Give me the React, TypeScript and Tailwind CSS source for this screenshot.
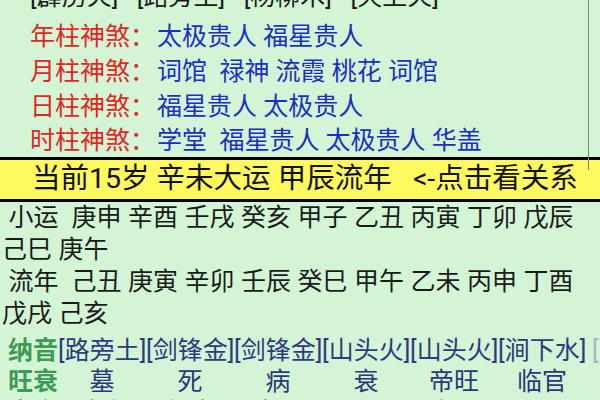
import React from "react";

const font = { fontFamily: "Roboto, 'Noto Sans CJK SC', sans-serif" };

const shensha = [
  { label: "年柱神煞：", value: "太极贵人 福星贵人" },
  { label: "月柱神煞：", value: "词馆  禄神 流霞 桃花 词馆" },
  { label: "日柱神煞：", value: "福星贵人 太极贵人" },
  { label: "时柱神煞：", value: "学堂  福星贵人 太极贵人 华盖" },
];

const luck = [
  " 小运  庚申 辛酉 壬戌 癸亥 甲子 乙丑 丙寅 丁卯 戊辰",
  "己巳 庚午",
  " 流年  己丑 庚寅 辛卯 壬辰 癸巳 甲午 乙未 丙申 丁酉",
  "戊戌 己亥",
];

const nayin = ["[路旁土]", "[剑锋金]", "[剑锋金]", "[山头火]", "[山头火]", "[涧下水]"];
const wangshuai = ["墓", "死", "病", "衰", "帝旺", "临官"];
const kongwang = ["戌亥", "午未", "申酉", "子丑", "寅卯", "辰巳"];

export default function App() {
  return (
    <div className="relative h-screen w-full overflow-hidden bg-[#d3f5d5]" style={font}>
      <div className="absolute left-[588px] top-0 h-[170px] w-px bg-[#6f8a72]" />

      {/* top: hidden nayin line + shensha */}
      <div className="h-[157px]">
        <div className="h-[14px] overflow-hidden">
          <div className="-mt-[21px] whitespace-pre pl-[30px] text-[25px] leading-[35px] text-[#1a1a1a]">
            {"[霹雳火]   [路旁土]   [杨柳木]   [天上火]"}
          </div>
        </div>
        <div className="mt-[5px]">
          {shensha.map((row, i) => (
            <div
              key={i}
              className={`flex items-center whitespace-pre pl-[30px] text-[25px] ${
                i === 3 ? "h-[33px]" : "h-[35px]"
              }`}
            >
              <span className="w-[127px] text-[#e3241f]">{row.label}</span>
              <span className="text-[#1c2fc4]">{row.value}</span>
            </div>
          ))}
        </div>
      </div>

      {/* current luck bar */}
      <div className="flex h-[45px] items-center whitespace-pre border-y-[3px] border-black bg-[#fdf95f] pl-[32px] text-[28.5px] text-[#111]">
        {"当前15岁 辛未大运 甲辰流年   <-点击看关系"}
      </div>

      {/* xiaoyun / liunian */}
      <div className="pl-[2px] text-[25px] leading-[32px] text-[#1a1a1a] [word-spacing:0.3px]">
        {luck.map((line, i) => (
          <div key={i} className="whitespace-pre">
            {line}
          </div>
        ))}
      </div>

      {/* pillars table */}
      <div className="mt-[2px] pl-[8px] text-[25px]">
        <div className="grid h-[31px] grid-cols-[50px_repeat(7,88px)] items-center whitespace-nowrap">
          <span className="font-bold text-[#3e9a55]">纳音</span>
          {nayin.map((n, i) => (
            <span key={i} className="text-center text-[#2d3a80]">
              {n}
            </span>
          ))}
          <span className="pl-[6px] text-left text-[#aab4cc]">[大林木]</span>
        </div>
        <div className="grid h-[31px] grid-cols-[50px_repeat(7,88px)] items-center whitespace-nowrap">
          <span className="font-bold text-[#3e9a55]">旺衰</span>
          {wangshuai.map((n, i) => (
            <span key={i} className="text-center text-[#2b3778]">
              {n}
            </span>
          ))}
        </div>
        <div className="grid h-[31px] grid-cols-[50px_repeat(7,88px)] items-center whitespace-nowrap">
          <span className="font-bold text-[#3e9a55]">空亡</span>
          {kongwang.map((n, i) => (
            <span key={i} className="text-center text-[#2b3778]">
              {n}
            </span>
          ))}
        </div>
      </div>
    </div>
  );
}
